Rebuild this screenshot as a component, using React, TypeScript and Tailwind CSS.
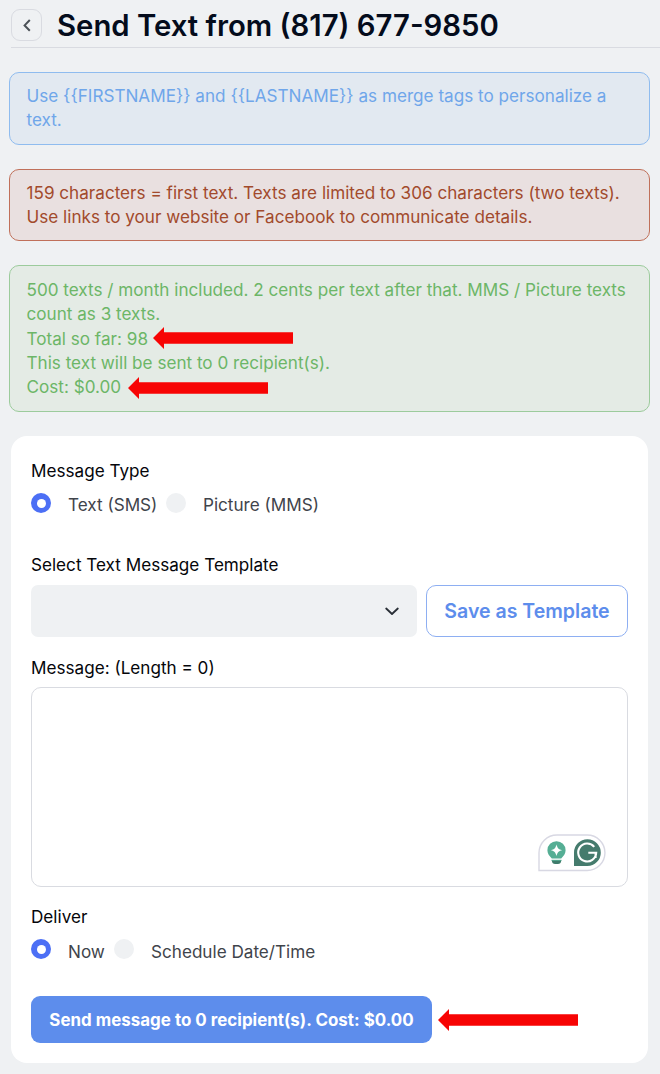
import type { ReactNode } from "react";

function Arrow({ className }: { className: string }) {
  return (
    <svg className={className} width="141" height="22" viewBox="0 0 141 22" fill="#f70404">
      <path d="M0 11 L11 0 V5.3 H140 V16.7 H11 V22 Z" />
    </svg>
  );
}

function Radio({ checked }: { checked?: boolean }) {
  return checked ? (
    <span className="flex size-5 shrink-0 items-center justify-center rounded-full bg-[#4c6ff5]">
      <span className="size-[9px] rounded-full bg-white" />
    </span>
  ) : (
    <span className="size-5 shrink-0 rounded-full bg-[#eff1f3]" />
  );
}

function Notice({ className, children }: { className: string; children: ReactNode }) {
  return (
    <div
      className={`w-[641px] rounded-[10px] border pl-[16.5px] pr-3 text-[17.14px] leading-[24.4px] ${className}`}
    >
      {children}
    </div>
  );
}

export default function App() {
  return (
    <div className="h-[1074px] w-[660px] overflow-hidden bg-[#eff1f3] font-['Inter',sans-serif] text-[#05060a]">
      <header className="ml-[11px] flex h-12 items-start border-b border-[#d9dbe1] pt-[9px]">
        <button className="flex h-8 w-[31px] items-center justify-center rounded-[9px] border border-[#d9dbe1]">
          <svg width="8" height="13" viewBox="0 0 8 13" fill="none" stroke="#4b5157" strokeWidth="2">
            <path d="M6.8 1 L1.6 6.4 L6.8 11.8" />
          </svg>
        </button>
        <h1 className="ml-[15px] whitespace-nowrap text-[29.3px] font-semibold leading-[34px] text-[#040c1c]">
          Send Text from (817) 677-9850
        </h1>
      </header>

      <div className="mt-6 flex flex-col gap-6 pl-[9px]">
        <Notice className="h-[73px] border-[#8fbcef] bg-[#e2e9f1] pt-[11px] text-[#6fa6ea]">
          Use {"{{FIRSTNAME}}"} and {"{{LASTNAME}}"} as merge tags to personalize a
          <br />
          text.
        </Notice>
        <Notice className="h-[72px] border-[#c0705a] bg-[#e9e0e0] pt-[11px] text-[#a24a2c]">
          159 characters = first text. Texts are limited to 306 characters (two texts).
          <br />
          Use links to your website or Facebook to communicate details.
        </Notice>
        <Notice className="relative h-[147px] border-[#9ccb9c] bg-[#e4ebe5] pt-[11.7px] text-[#6cb667]">
          500 texts / month included. 2 cents per text after that. MMS / Picture texts
          <br />
          count as 3 texts.
          <br />
          Total so far: 98
          <br />
          This text will be sent to 0 recipient(s).
          <br />
          Cost: $0.00
          <Arrow className="absolute left-[143px] top-[61px]" />
          <Arrow className="absolute left-[118px] top-[111px]" />
        </Notice>
      </div>

      <main className="ml-[11px] mt-6 h-[627px] w-[637px] rounded-[16px] bg-white px-5 pt-[23px] text-[17.14px] leading-6">
        <div className="h-6">Message Type</div>
        <div className="mt-[10px] flex h-5 text-[#3f444b]">
          <Radio checked />
          <span className="ml-[17px] w-[98px] whitespace-nowrap">Text (SMS)</span>
          <Radio />
          <span className="ml-[17px] whitespace-nowrap">Picture (MMS)</span>
        </div>

        <div className="mt-10 h-6">Select Text Message Template</div>
        <div className="mt-2 flex gap-[9px]">
          <div className="flex h-[52px] w-[386px] items-center justify-end rounded-[7px] bg-[#eff1f3] pr-[18px]">
            <svg width="14" height="9" viewBox="0 0 14 9" fill="none" stroke="#292f36" strokeWidth="1.8">
              <path d="M1.2 1.5 L7 7 L12.8 1.5" strokeLinecap="round" strokeLinejoin="round" />
            </svg>
          </div>
          <button className="h-[52px] w-[202px] whitespace-nowrap rounded-[10px] border border-[#8eaff2] text-[19.55px] font-semibold text-[#5d8dec]">
            Save as Template
          </button>
        </div>

        <div className="mt-[18px] h-6 leading-[25px]">Message: (Length = 0)</div>
        <div className="mt-2 flex h-[200px] items-end justify-end rounded-[10px] border border-[#d9dbe1] pb-[14px] pr-[21px]">
          <svg width="68" height="38" viewBox="0 0 68 38" fill="none">
            <path
              d="M1 36.5 V19 A18 18 0 0 1 19 1 H49.2 A17.75 17.75 0 0 1 49.2 36.5 Z"
              fill="#fff"
              stroke="#d8d8e3"
              strokeWidth="1.4"
            />
            <path
              d="M18.5 7.2 a9 9 0 0 1 9.1 9 c0 3.4-1.9 5.6-4.4 8.3 h-9.4 c-2.5-2.7-4.4-4.9-4.4-8.3 a9 9 0 0 1 9.1-9z"
              fill="#55ae94"
            />
            <path
              d="M18.5 10.5 C19.5 14.2 20.5 15.3 24.1 16.2 C20.5 17.1 19.5 18.2 18.5 22 C17.5 18.2 16.5 17.1 12.9 16.2 C16.5 15.3 17.5 14.2 18.5 10.5Z"
              fill="#fff"
            />
            <path d="M13.9 26 H23.2 V27 Q22.9 29.9 19.9 29.9 H17.1 Q14.2 29.9 13.9 27Z" fill="#3f7c6c" />
            <path d="M13.5 26.3 H23.5" stroke="#55ae94" strokeWidth="1" />
            <path d="M36 32 V18.5 A13.4 13.4 0 1 1 49.4 32 Z" fill="#457b6d" />
            <path
              d="M56.2 12.8 A9 9 0 1 0 58.2 18.8 H50.3 M57.6 18.5 V24"
              stroke="#fff"
              strokeWidth="2.1"
            />
          </svg>
        </div>

        <div className="mt-[18px] h-6">Deliver</div>
        <div className="mt-[10px] flex h-5 text-[#3f444b]">
          <Radio checked />
          <span className="ml-[17px] w-[46px] whitespace-nowrap leading-[26px]">Now</span>
          <Radio />
          <span className="ml-[17px] whitespace-nowrap leading-[26px]">Schedule Date/Time</span>
        </div>

        <div className="mt-[37px] flex">
          <button className="h-[47px] w-[401px] whitespace-nowrap rounded-[9px] bg-[#5d8dec] text-[16.95px] font-bold text-white">
            Send message to 0 recipient(s). Cost: $0.00
          </button>
          <Arrow className="ml-[6px] mt-[13px]" />
        </div>
      </main>
    </div>
  );
}
